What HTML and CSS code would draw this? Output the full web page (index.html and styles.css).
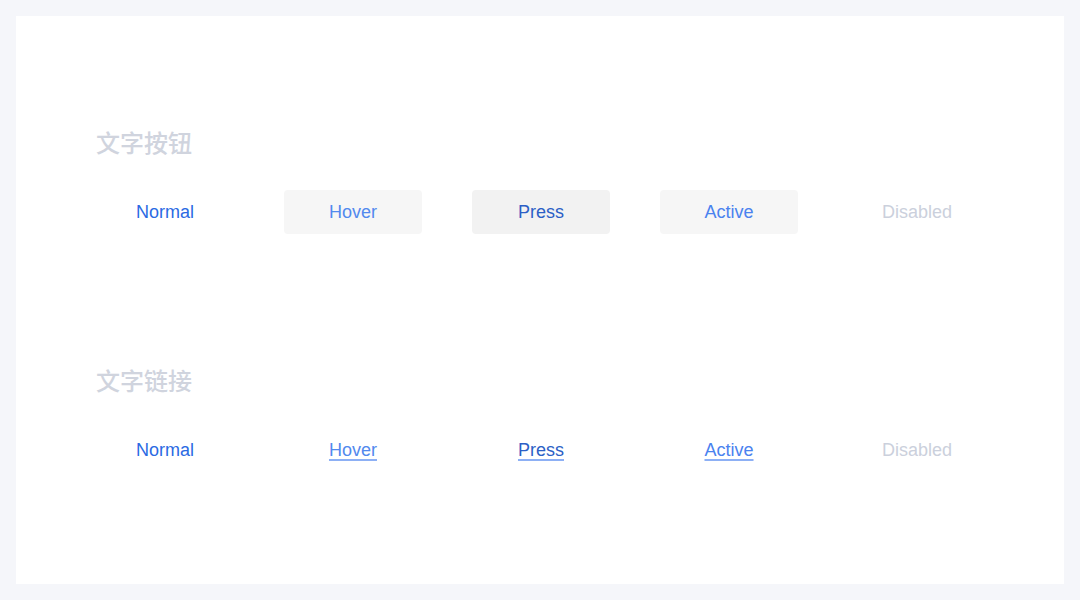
FILE: index.html
```html
<!DOCTYPE html>
<html lang="zh">
<head>
<meta charset="utf-8">
<link rel="stylesheet" href="styles.css">
</head>
<body>
<div class="card">
  <section class="section">
    <h2 class="title">文字按钮</h2>
    <div class="row">
      <div class="btn normal">Normal</div>
      <div class="btn hover bg">Hover</div>
      <div class="btn press bg-press">Press</div>
      <div class="btn active bg">Active</div>
      <div class="btn disabled">Disabled</div>
    </div>
  </section>
  <section class="section second">
    <h2 class="title">文字链接</h2>
    <div class="row">
      <div class="btn normal"><span>Normal</span></div>
      <div class="btn hover"><span class="link">Hover</span></div>
      <div class="btn press"><span class="link">Press</span></div>
      <div class="btn active"><span class="link">Active</span></div>
      <div class="btn disabled"><span>Disabled</span></div>
    </div>
  </section>
</div>
</body>
</html>
```
FILE: styles.css
```css
html, body {
  margin: 0;
  padding: 0;
}
body {
  background: #f5f6fa;
  width: 1080px;
  height: 600px;
  padding: 16px;
  box-sizing: border-box;
  font-family: "Liberation Sans", "Noto Sans CJK SC", sans-serif;
}
.card {
  background: #ffffff;
  height: 568px;
  box-sizing: border-box;
  padding: 114px 80px 0 80px;
}
.section {
  display: flex;
  flex-direction: column;
  gap: 36px;
}
.second {
  margin-top: 134px;
}
.title {
  margin: 0;
  height: 24px;
  line-height: 24px;
  font-size: 24px;
  font-weight: 500;
  color: #d0d4de;
  font-family: "Noto Sans CJK SC", sans-serif;
}
.row {
  display: flex;
  gap: 50px;
}
.btn {
  flex: 0 0 138px;
  width: 138px;
  height: 44px;
  border-radius: 4px;
  display: flex;
  align-items: center;
  justify-content: center;
  font-size: 18px;
}
.bg { background: #f6f6f6; }
.bg-press { background: #f2f2f2; }
.normal { color: #2b6ae3; }
.hover { color: #5289ee; }
.press { color: #2c5fc6; }
.active { color: #4a82ef; }
.disabled { color: #cbd0dc; }
.link {
  text-decoration: underline;
  text-decoration-color: #8db0f5;
  text-decoration-thickness: 2px;
  text-underline-offset: 3px;
}
```
